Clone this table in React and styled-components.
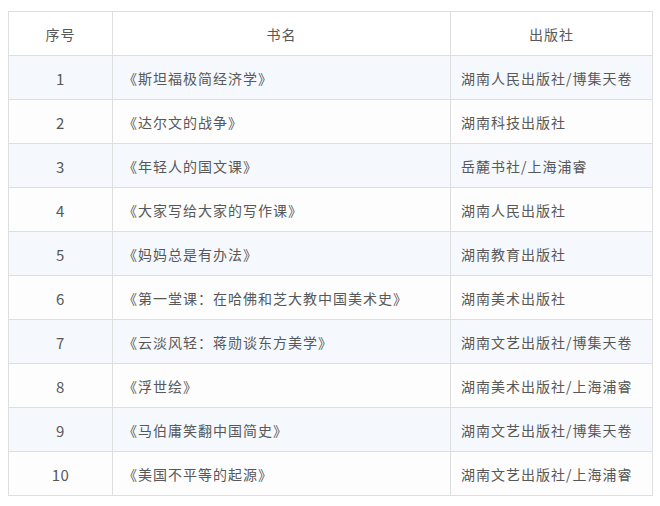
import React from "react";
import styled, { createGlobalStyle } from "styled-components";

const Global = createGlobalStyle`
  html, body { margin: 0; padding: 0; background: #fff; }
  body { font-family: "Noto Sans CJK SC", "Noto Sans", sans-serif; }
`;

const Page = styled.div`
  padding: 11px 8px 0 8px;
`;

const Grid = styled.div`
  display: grid;
  grid-template-columns: 104px 338px 202px;
  grid-auto-rows: 44px;
  width: 645px;
  border-top: 1px solid #dedede;
  border-left: 1px solid #dedede;
  box-sizing: border-box;
`;

const Cell = styled.div`
  display: flex;
  align-items: center;
  justify-content: ${(p) => (p.$center ? "center" : "flex-start")};
  padding: 1px ${(p) => (p.$center ? "0" : "10px")} 0;
  border-right: 1px solid #dedede;
  border-bottom: 1px solid #dedede;
  background: ${(p) => (p.$stripe ? "#f5f8fd" : p.$head ? "#ffffff" : "#fdfdfd")};
  color: #585858;
  font-size: ${(p) => (p.$num ? "15px" : "14px")};
  letter-spacing: ${(p) => (p.$num ? "0.5px" : "1px")};
  white-space: nowrap;
  overflow: hidden;
`;

const rows = [
  ["1", "《斯坦福极简经济学》", "湖南人民出版社/博集天卷"],
  ["2", "《达尔文的战争》", "湖南科技出版社"],
  ["3", "《年轻人的国文课》", "岳麓书社/上海浦睿"],
  ["4", "《大家写给大家的写作课》", "湖南人民出版社"],
  ["5", "《妈妈总是有办法》", "湖南教育出版社"],
  ["6", "《第一堂课：在哈佛和芝大教中国美术史》", "湖南美术出版社"],
  ["7", "《云淡风轻：蒋勋谈东方美学》", "湖南文艺出版社/博集天卷"],
  ["8", "《浮世绘》", "湖南美术出版社/上海浦睿"],
  ["9", "《马伯庸笑翻中国简史》", "湖南文艺出版社/博集天卷"],
  ["10", "《美国不平等的起源》", "湖南文艺出版社/上海浦睿"],
];

export default function App() {
  return (
    <Page>
      <Global />
      <Grid>
        <Cell $center $head>序号</Cell>
        <Cell $center $head>书名</Cell>
        <Cell $center $head>出版社</Cell>
        {rows.map((r, i) => {
          const stripe = i % 2 === 0;
          return (
            <React.Fragment key={r[0]}>
              <Cell $center $num $stripe={stripe}>{r[0]}</Cell>
              <Cell $stripe={stripe}>{r[1]}</Cell>
              <Cell $stripe={stripe}>{r[2]}</Cell>
            </React.Fragment>
          );
        })}
      </Grid>
    </Page>
  );
}
